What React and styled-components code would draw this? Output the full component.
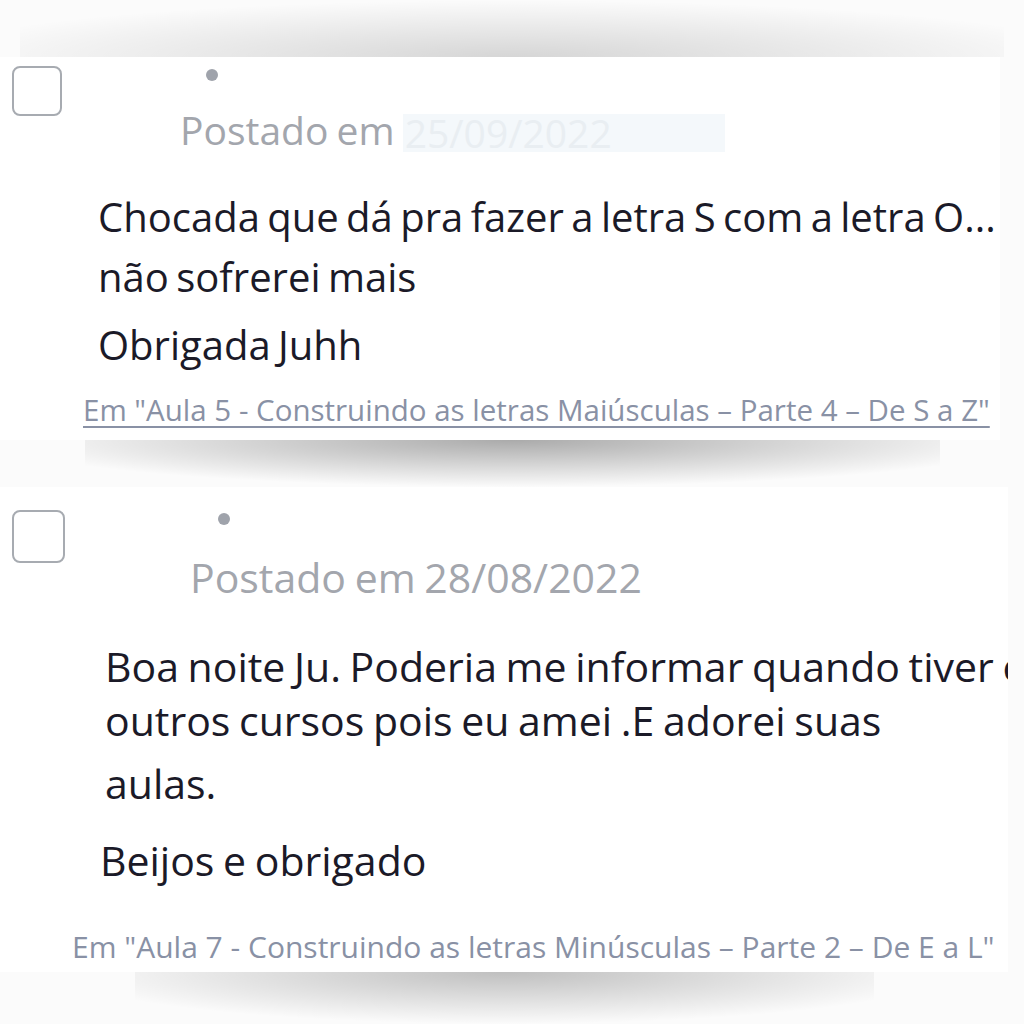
import styled, { css, createGlobalStyle } from 'styled-components';

const GlobalStyle = createGlobalStyle`
  html, body {
    margin: 0;
    padding: 0;
    background: #fbfbfb;
  }
  body {
    font-family: 'Open Sans', 'Noto Sans', sans-serif;
  }
`;

const Page = styled.div`
  width: 1024px;
  height: 1024px;
  overflow: hidden;
  display: flex;
  flex-direction: column;
`;

// the soft grey shadow that sits between the cards
const Shade = styled.div`
  height: ${(p) => p.h}px;
  flex: none;
  margin: 0 ${(p) => p.right}px 0 ${(p) => p.left}px;
  background: radial-gradient(
    ellipse 60% 100% at 50% ${(p) => (p.up ? '100%' : '0%')},
    rgba(0, 0, 0, ${(p) => p.strength}) 0%,
    rgba(0, 0, 0, 0) 100%
  );
`;

const Card = styled.div`
  background: #ffffff;
  height: ${(p) => p.h}px;
  flex: none;
  margin-right: ${(p) => p.right}px;
  padding: ${(p) => p.top}px 0 0 12px;
  box-sizing: border-box;
  overflow: hidden;
  display: flex;
  flex-direction: column;
`;

const Header = styled.div`
  display: flex;
  align-items: flex-start;
`;

const Checkbox = styled.div`
  width: ${(p) => p.size}px;
  height: ${(p) => p.size}px;
  box-sizing: border-box;
  border: 2.5px solid #a7abb1;
  border-radius: 8px;
  flex: none;
`;

const Meta = styled.div`
  display: flex;
  flex-direction: column;
  margin-left: ${(p) => p.indent}px;
`;

const Dot = styled.span`
  width: 12px;
  height: 12px;
  border-radius: 50%;
  background: #9fa3ab;
  margin: 3px 0 0 ${(p) => p.shift}px;
`;

const Posted = styled.div`
  font-size: ${(p) => p.size}px;
  line-height: 48px;
  color: #a3a6ad;
  margin-top: ${(p) => p.gap}px;
  white-space: nowrap;
  word-spacing: -2px;
`;

// date that was blanked out in the screenshot: pale box, near invisible digits
const Date = styled.span`
  color: #a3a6ad;
  ${(p) =>
    p.faded &&
    css`
      display: inline-block;
      line-height: 38px;
      vertical-align: middle;
      margin-top: -4px;
      padding: 0 ${p.pad}px 0 2px;
      background: #f4f8fb;
      color: #e9eef2;
    `}
`;

const Body = styled.div`
  display: flex;
  flex-direction: column;
  margin: ${(p) => p.top}px 0 0 ${(p) => p.indent}px;
`;

const Line = styled.p`
  margin: 0;
  height: ${(p) => p.h}px;
  font-size: ${(p) => p.size}px;
  line-height: ${(p) => p.h}px;
  color: #1b1a28;
  white-space: nowrap;
  word-spacing: ${(p) => p.ws}px;
  margin-left: ${(p) => p.nudge || 0}px;
`;

const Source = styled.a`
  display: block;
  margin: ${(p) => p.top}px 0 0 ${(p) => p.indent}px;
  font-size: ${(p) => p.size}px;
  line-height: 36px;
  color: #8991a5;
  text-decoration: ${(p) => (p.underline ? 'underline' : 'none')};
  text-decoration-thickness: 2px;
  text-underline-offset: 5px;
  white-space: nowrap;
`;

const comments = [
  {
    id: 1,
    height: 383,
    right: 24,
    top: 9,
    box: 50,
    metaIndent: 118,
    dotShift: 26,
    postedSize: 39,
    postedGap: 25,
    date: '25/09/2022',
    faded: true,
    datePad: 113,
    bodyTop: 33,
    bodyIndent: 86,
    textSize: 40,
    ws: -3,
    lines: [
      { text: 'Chocada que dá pra fazer a letra S com a letra O...', h: 60 },
      { text: 'não sofrerei mais', h: 60 },
      { text: 'Obrigada Juhh', h: 76 },
    ],
    sourceTop: 9,
    sourceIndent: 71,
    sourceSize: 29.5,
    underline: true,
    source: 'Em "Aula 5 - Construindo as letras Maiúsculas – Parte 4 – De S a Z"',
  },
  {
    id: 2,
    height: 485,
    right: 16,
    top: 23,
    box: 53,
    metaIndent: 125,
    dotShift: 28,
    postedSize: 41,
    postedGap: 28,
    date: '28/08/2022',
    faded: false,
    datePad: 0,
    bodyTop: 37,
    bodyIndent: 93,
    textSize: 41,
    ws: -2,
    lines: [
      { text: 'Boa noite Ju. Poderia me informar quando tiver o', h: 56 },
      { text: 'outros cursos pois eu amei .E adorei suas', h: 52 },
      { text: 'aulas.', h: 74 },
      { text: 'Beijos e obrigado', h: 80, nudge: -5 },
    ],
    sourceTop: 29,
    sourceIndent: 60,
    sourceSize: 30,
    underline: false,
    source: 'Em "Aula 7 - Construindo as letras Minúsculas – Parte 2 – De E a L"',
  },
];

const Comment = ({ c }) => (
  <Card h={c.height} right={c.right} top={c.top}>
    <Header>
      <Checkbox size={c.box} />
      <Meta indent={c.metaIndent}>
        <Dot shift={c.dotShift} />
        <Posted size={c.postedSize} gap={c.postedGap}>
          Postado em{' '}
          <Date faded={c.faded} pad={c.datePad}>
            {c.date}
          </Date>
        </Posted>
      </Meta>
    </Header>
    <Body top={c.bodyTop} indent={c.bodyIndent}>
      {c.lines.map((l) => (
        <Line key={l.text} h={l.h} size={c.textSize} ws={c.ws} nudge={l.nudge}>
          {l.text}
        </Line>
      ))}
    </Body>
    <Source
      href="#"
      top={c.sourceTop}
      indent={c.sourceIndent}
      size={c.sourceSize}
      underline={c.underline}
    >
      {c.source}
    </Source>
  </Card>
);

export default function App() {
  return (
    <Page>
      <GlobalStyle />
      <Shade h={57} left={20} right={20} strength={0.15} up />
      <Comment c={comments[0]} />
      <Shade h={47} left={85} right={84} strength={0.32} />
      <Comment c={comments[1]} />
      <Shade h={52} left={135} right={150} strength={0.24} />
    </Page>
  );
}
